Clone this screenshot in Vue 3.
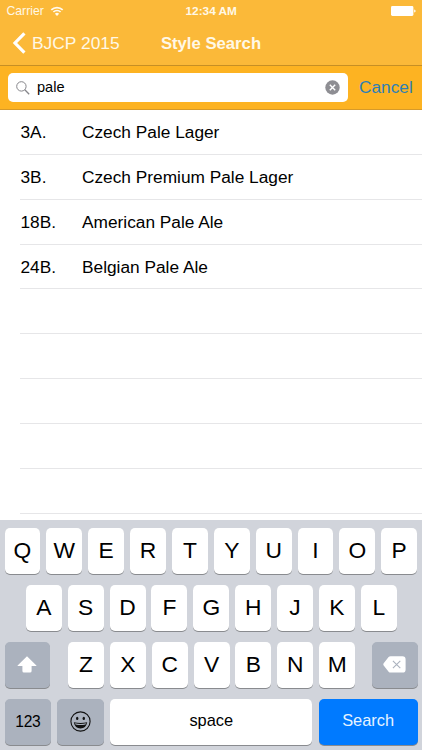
<template>
  <div class="phone">
    <header class="top-bar">
      <div class="status-bar">
        <div class="status-left">
          <span>Carrier</span>
          <svg class="wifi-icon" viewBox="0 0 14 10" width="14" height="10" fill="none" stroke="#fffaf0">
            <path d="M1.3 3.9a8.1 8.1 0 0 1 11.4 0" stroke-width="1.7" />
            <path d="M3.4 6a5.1 5.1 0 0 1 7.2 0" stroke-width="1.7" />
            <path d="M7 10L4.9 7.8a3 3 0 0 1 4.2 0z" fill="#fffaf0" stroke="none" />
          </svg>
        </div>
        <span class="status-time">12:34 AM</span>
        <svg class="battery-icon" viewBox="0 0 25 10" width="25" height="10" fill="#fff">
          <rect x="0" y="0" width="22.4" height="10" rx="1.4" />
          <path d="M23.2 3.4q1.4 0.4 1.4 1.6t-1.4 1.6z" />
        </svg>
      </div>
      <nav class="nav-bar">
        <button class="back-btn">
          <svg viewBox="0 0 14 22" width="14" height="22" fill="none" stroke="#fff" stroke-width="3.2">
            <path d="M12.4 1.4L3 11L12.4 20.6" />
          </svg>
          <span>BJCP 2015</span>
        </button>
        <span class="nav-title">Style Search</span>
      </nav>
    </header>

    <div class="search-bar">
      <label class="search-field">
        <svg viewBox="0 0 14 14" width="14" height="14" fill="none" stroke="#85858a">
          <circle cx="5.4" cy="5.4" r="4.7" stroke-width="1" />
          <path d="M8.8 8.8L13.2 13.2" stroke-width="1.3" />
        </svg>
        <input v-model="keyword" class="search-input" type="text" />
        <button class="clear-btn" @click="keyword = ''">
          <svg viewBox="0 0 15 15" width="15" height="15">
            <circle cx="7.5" cy="7.5" r="7.2" fill="#8e8e93" />
            <path d="M4.8 4.8l5.4 5.4M10.2 4.8l-5.4 5.4" stroke="#fff" stroke-width="1.4" />
          </svg>
        </button>
      </label>
      <button class="cancel-btn" @click="keyword = ''">Cancel</button>
    </div>

    <ul class="style-list">
      <li v-for="(item, index) in rows" :key="index" class="style-row">
        <span class="style-code">{{ item.code }}</span>
        <span class="style-name">{{ item.name }}</span>
      </li>
    </ul>

    <div class="keyboard">
      <div class="key-row">
        <button v-for="k in 'QWERTYUIOP'" :key="k" class="key" @click="press(k)">{{ k }}</button>
      </div>
      <div class="key-row middle">
        <button v-for="k in 'ASDFGHJKL'" :key="k" class="key" @click="press(k)">{{ k }}</button>
      </div>
      <div class="key-row spread">
        <button class="key dark shift">
          <svg viewBox="0 0 20 17" width="20" height="17" fill="#fff">
            <path d="M10 0.3L19.4 9.4q0.3 0.7-0.5 0.7H14.6V15q0 1.6-1.6 1.6H7q-1.6 0-1.6-1.6V10.1H1.1q-0.8 0-0.5-0.7z" />
          </svg>
        </button>
        <div class="key-group">
          <button v-for="k in 'ZXCVBNM'" :key="k" class="key" @click="press(k)">{{ k }}</button>
        </div>
        <button class="key dark shift" @click="keyword = keyword.slice(0, -1)">
          <svg viewBox="0 0 23 17" width="23" height="17">
            <path d="M7.6 0.2H19.4q3.2 0 3.2 3.2V13.4q0 3.2-3.2 3.2H7.6q-1.2 0-2-0.9L0.7 9.5q-0.8-1.1 0-2.2L5.6 1.1q0.8-0.9 2-0.9z" fill="#fff" />
            <path d="M9.9 4.8l7.4 7.4M17.3 4.8l-7.4 7.4" stroke="#abb2be" stroke-width="1.1" />
          </svg>
        </button>
      </div>
      <div class="key-row bottom">
        <button class="key dark num">123</button>
        <button class="key dark emoji">
          <svg viewBox="0 0 21 21" width="21" height="21">
            <circle cx="10.5" cy="10.5" r="9.6" fill="none" stroke="#111" stroke-width="1.1" />
            <ellipse cx="7.2" cy="7.4" rx="1.2" ry="1.6" fill="#111" />
            <ellipse cx="13.8" cy="7.4" rx="1.2" ry="1.6" fill="#111" />
            <path d="M3.8 11.2Q10.5 12.8 17.2 11.2Q16 17.4 10.5 17.4T3.8 11.2z" fill="#111" />
            <path d="M5 12.3Q10.5 13.5 16 12.3L15.5 13.5Q10.5 14.6 5.5 13.5z" fill="#abb2be" />
          </svg>
        </button>
        <button class="key space" @click="keyword += ' '">space</button>
        <button class="key search">Search</button>
      </div>
    </div>
  </div>
</template>

<script setup>
import { ref, computed } from 'vue';

const ROW_COUNT = 9;

const keyword = ref('pale');

const styles = [
  { code: '3A.', name: 'Czech Pale Lager' },
  { code: '3B.', name: 'Czech Premium Pale Lager' },
  { code: '18B.', name: 'American Pale Ale' },
  { code: '24B.', name: 'Belgian Pale Ale' }
];

// 不足一屏时用空行补齐
const rows = computed(() => {
  const word = keyword.value.trim().toLowerCase();
  const matched = styles.filter((item) => item.name.toLowerCase().includes(word));
  const blanks = Array.from({ length: ROW_COUNT - matched.length }, () => ({ code: '', name: '' }));
  return [...matched, ...blanks];
});

function press(k) {
  keyword.value += k.toLowerCase();
}
</script>

<style>
body {
  margin: 0;
}
</style>

<style scoped>
.phone {
  width: 422px;
  height: 750px;
  display: flex;
  flex-direction: column;
  overflow: hidden;
  background-color: #fff;
  font-family: "Liberation Sans", Arial, sans-serif;
  color: #000;
}

button {
  padding: 0;
  border: none;
  background: none;
  font-family: inherit;
  cursor: pointer;
}

svg {
  display: block;
  flex-shrink: 0;
}

.top-bar {
  height: 65px;
  flex-shrink: 0;
  background-color: #fbb939;
  border-bottom: 1px solid #c68f25;
  color: #fff8e6;
}

.status-bar {
  height: 21px;
  padding: 0 6px 0 6.5px;
  display: grid;
  grid-template-columns: 1fr auto 1fr;
  align-items: center;
  font-size: 12.2px;
}

.status-left {
  display: flex;
  align-items: center;
  gap: 6px;
}

.status-time {
  font-size: 11.8px;
  font-weight: bold;
}

.battery-icon {
  justify-self: end;
}

.nav-bar {
  height: 44px;
  padding: 0 12px;
  display: grid;
  grid-template-columns: 1fr auto 1fr;
  align-items: center;
}

.back-btn {
  display: flex;
  align-items: center;
  gap: 6px;
  font-size: 17.4px;
  color: inherit;
}

.nav-title {
  padding-top: 2px;
  font-size: 16.7px;
  font-weight: bold;
}

.search-bar {
  height: 43px;
  flex-shrink: 0;
  padding-left: 8px;
  display: flex;
  align-items: center;
  background-color: #fdb322;
  border-bottom: 1px solid #d69a2a;
}

.search-field {
  width: 340px;
  height: 29px;
  padding: 0 8px;
  box-sizing: border-box;
  display: flex;
  align-items: center;
  border-radius: 5px;
  background-color: #fff;
}

.search-input {
  flex: 1;
  min-width: 0;
  padding: 0 0 1px 7px;
  border: none;
  outline: none;
  background: none;
  font-family: inherit;
  font-size: 14.6px;
  color: #000;
}

.cancel-btn {
  margin-left: 11px;
  font-size: 17.3px;
  color: #2f7fb5;
}

.style-list {
  flex: 1;
  min-height: 0;
  margin: 0;
  padding: 0 0 0 20px;
  overflow: hidden;
  list-style: none;
}

.style-row {
  height: 44.85px;
  padding-top: 2px;
  box-sizing: border-box;
  display: flex;
  align-items: center;
  border-bottom: 1px solid #e6e6e8;
  font-size: 17.3px;
}

.style-code {
  width: 61.5px;
  padding-left: 0.5px;
}

.keyboard {
  height: 230.5px;
  flex-shrink: 0;
  box-sizing: border-box;
  padding: 8.5px 4.5px 0;
  display: flex;
  flex-direction: column;
  gap: 11px;
  background-color: #d1d4db;
}

.key-row,
.key-group {
  display: flex;
  gap: 5.9px;
}

.key-row.middle {
  padding-left: 0.6px;
  justify-content: center;
}

.key-row.spread {
  justify-content: space-between;
}

.key-group {
  padding-left: 1.2px;
}

.key-row.bottom {
  gap: 6.3px;
}

.key {
  width: 35.97px;
  height: 46px;
  flex-shrink: 0;
  padding-bottom: 1px;
  box-sizing: border-box;
  display: flex;
  align-items: center;
  justify-content: center;
  border-radius: 5px;
  background-color: #fff;
  box-shadow: 0 1px 0 #898b8f;
  font-size: 22.8px;
  color: #000;
}

.key.dark {
  background-color: #abb2be;
}

.key.shift {
  width: 45.7px;
}

.key.num {
  width: 46.7px;
  padding-bottom: 0;
  font-size: 15.6px;
  letter-spacing: -0.3px;
}

.key.emoji {
  width: 46.3px;
  padding-bottom: 2px;
}

.key.space {
  width: 202.4px;
  padding-bottom: 4px;
  font-size: 16.4px;
}

.key.search {
  flex: 1;
  padding-bottom: 4px;
  background-color: #007aff;
  font-size: 16.4px;
  color: #e6f3ff;
}
</style>
